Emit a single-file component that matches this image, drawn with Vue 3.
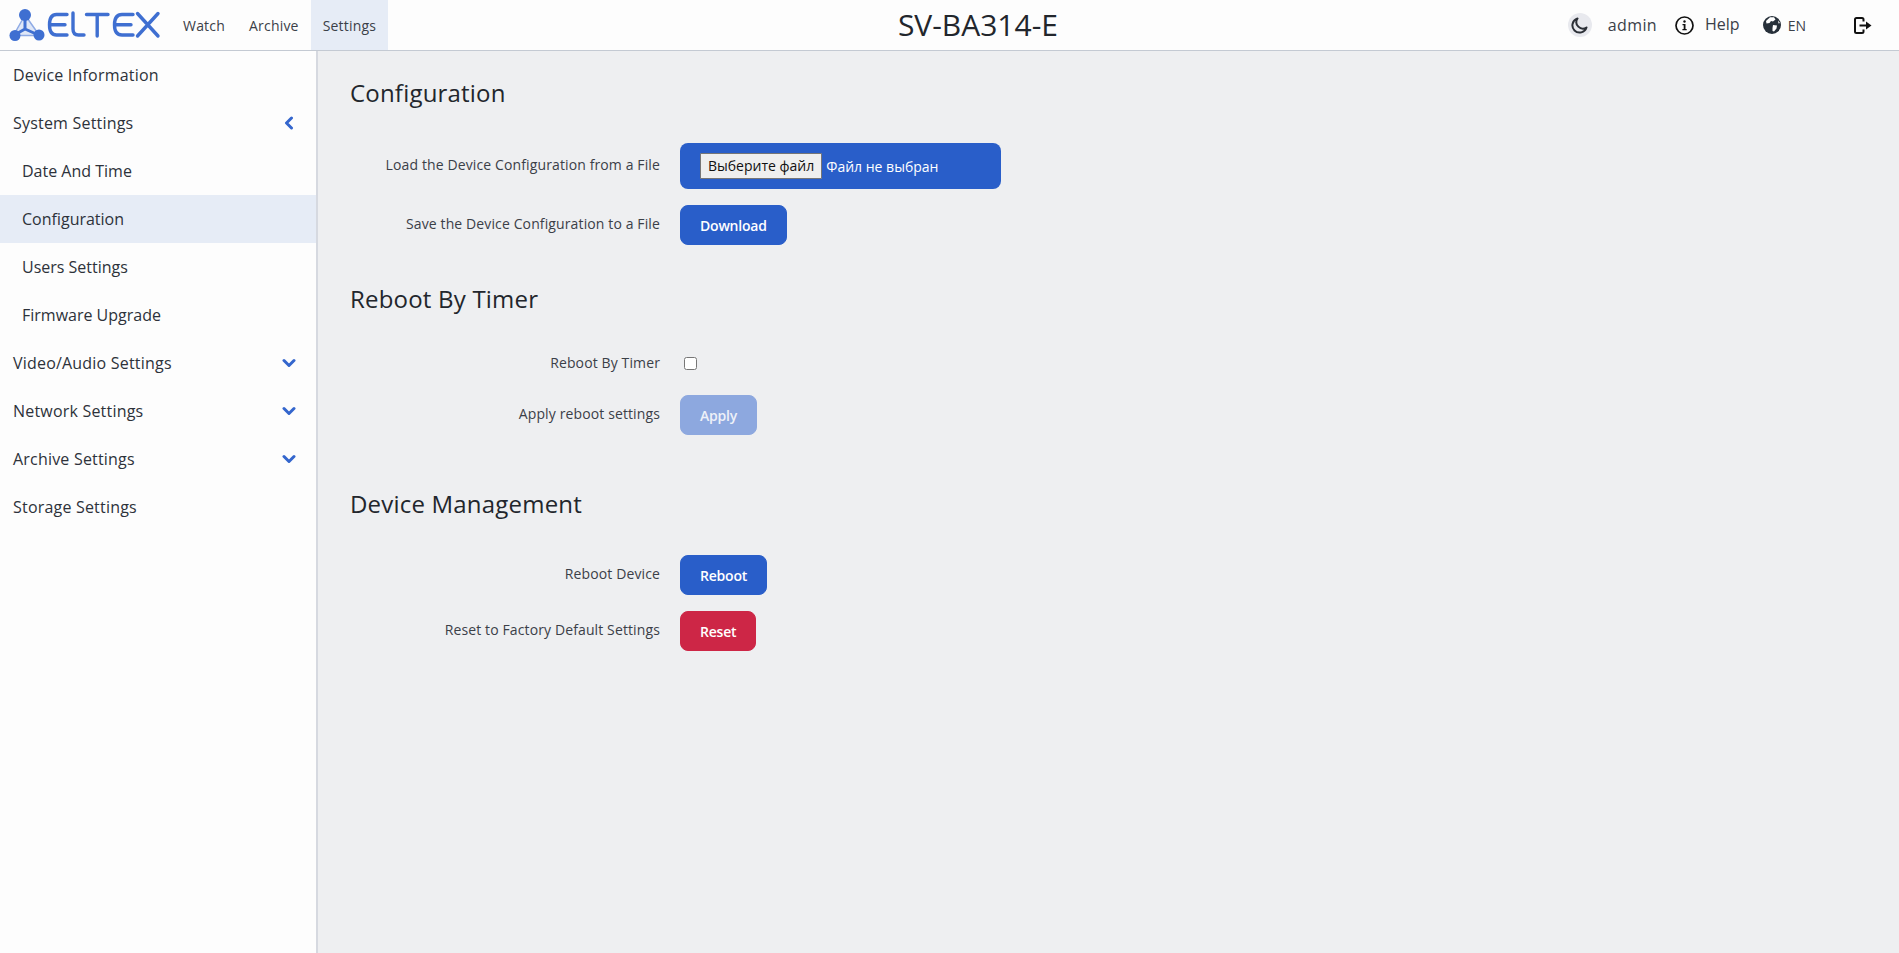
<script setup>
const nav = [
  { label: 'Watch' },
  { label: 'Archive' },
  { label: 'Settings', active: true },
]
const menu = [
  { label: 'Device Information' },
  { label: 'System Settings', arrow: 'left' },
  { label: 'Date And Time', sub: true },
  { label: 'Configuration', sub: true, active: true },
  { label: 'Users Settings', sub: true },
  { label: 'Firmware Upgrade', sub: true },
  { label: 'Video/Audio Settings', arrow: 'down' },
  { label: 'Network Settings', arrow: 'down' },
  { label: 'Archive Settings', arrow: 'down' },
  { label: 'Storage Settings' },
]
</script>

<template>
  <div class="page">
    <header class="top">
      <div class="left">
        <svg class="logo" width="171" height="50" viewBox="0 0 171 50" role="img" aria-label="Eltex">
          <path d="M25 15 L13.500 35.500 H39.500 Z" fill="#dfe7f7" stroke="#8fabe5" stroke-width="1.500" />
          <path d="M25 15 V29 M13.500 35.500 L25 29 L39.500 35.500" fill="none" stroke="#3f6fd1" stroke-width="3" stroke-linecap="round" stroke-linejoin="round" />
          <g fill="#3f6fd1">
            <circle cx="25" cy="15" r="6" />
            <circle cx="15" cy="35.500" r="5.500" />
            <circle cx="39" cy="35" r="5.500" />
          </g>
          <g fill="none" stroke="#3f6fd1" stroke-width="3.400" stroke-linecap="round" stroke-linejoin="round">
            <path d="M67 14.500 H56.500 Q49.500 14.500 49.500 24.700 Q49.500 35 56.500 35 H67 M49.500 24.700 H65" />
            <path d="M73 13 V29 Q73 35 78.500 35 H84" />
            <path d="M86.500 14.500 H108 M97.200 14.500 V36" />
            <path d="M133 14.500 H122 Q114.500 14.500 114.500 24.700 Q114.500 35 122 35 H133 M114.500 24.700 H131" />
            <path d="M137.500 13.500 L158 36 M158 13.500 L137.500 36" />
          </g>
        </svg>
        <nav class="nav">
          <a v-for="n in nav" :key="n.label" class="nav-item" :class="{ on: n.active }">{{ n.label }}</a>
        </nav>
      </div>
      <div class="title">SV-BA314-E</div>
      <div class="right">
        <span class="theme">
          <svg width="17" height="17" viewBox="0 0 17 17" fill="none" stroke="#2b2f36" stroke-width="2">
            <path d="M6.500 1.500 A7.200 7.200 0 1 0 15.500 10.500 A6.500 6.500 0 0 1 6.500 1.500 Z" stroke-linejoin="round" />
          </svg>
        </span>
        <span class="user">admin</span>
        <svg class="info" width="19" height="19" viewBox="0 0 19 19">
          <circle cx="9.500" cy="9.500" r="8.500" fill="none" stroke="#111" stroke-width="1.700" />
          <circle cx="9.500" cy="5.500" r="1.200" fill="#111" />
          <path d="M7.500 8 H10.500 V13 H11.700 V14.200 H7.400 V13 H8.700 V9.200 H7.500 Z" fill="#111" />
        </svg>
        <span class="help">Help</span>
        <svg class="globe" width="18" height="18" viewBox="0 0 18 18">
          <circle cx="9" cy="9" r="9" fill="#27303a" />
          <path d="M7 1.300 L11 1.300 L12.500 3.500 L10 5.500 L8 5 L6.500 7 L3.500 7.500 L3 5 Z M10 9 L14 9.500 L13.500 12.500 L11 15.500 L9.500 15 L9.500 12 Z M15 4.500 L17 7 L15.500 7.500 Z" fill="#fff" />
        </svg>
        <span class="lang">EN</span>
        <svg class="exit" width="18" height="17" viewBox="0 0 18 17" fill="none">
          <path d="M9.500 4.500 V2.500 Q9.500 1 8 1 H2.500 Q1 1 1 2.500 V14.500 Q1 16 2.500 16 H8 Q9.500 16 9.500 14.500 V12.500" stroke="#111" stroke-width="2" />
          <path d="M5.500 7.400 H12 V4.500 L17.500 8.500 L12 12.500 V9.600 H5.500 Z" fill="#111" />
        </svg>
      </div>
    </header>

    <div class="body">
      <aside class="side">
        <div
          v-for="m in menu"
          :key="m.label"
          class="menu-item"
          :class="{ sub: m.sub, on: m.active }"
        >
          <span>{{ m.label }}</span>
          <svg v-if="m.arrow === 'left'" class="arrow-left" width="10" height="14" viewBox="0 0 10 14" fill="none" stroke="#3466cd" stroke-width="3" stroke-linecap="round" stroke-linejoin="round">
            <path d="M7.500 2 L2.500 7 L7.500 12" />
          </svg>
          <svg v-if="m.arrow === 'down'" class="arrow-down" width="14" height="10" viewBox="0 0 14 10" fill="none" stroke="#3466cd" stroke-width="3" stroke-linecap="round" stroke-linejoin="round">
            <path d="M2 2.500 L7 7.500 L12 2.500" />
          </svg>
        </div>
      </aside>

      <main class="content">
        <section class="first">
          <h2>Configuration</h2>
          <div class="rows">
            <div class="row">
              <label class="file-label">Load the Device Configuration from a File</label>
              <div class="file-box">
                <span class="file-btn">Выберите файл</span>
                <span class="file-text">Файл не выбран</span>
              </div>
            </div>
            <div class="row">
              <label>Save the Device Configuration to a File</label>
              <button class="btn">Download</button>
            </div>
          </div>
        </section>

        <section class="second">
          <h2>Reboot By Timer</h2>
          <div class="rows">
            <div class="row check-row">
              <label>Reboot By Timer</label>
              <input type="checkbox" class="check" />
            </div>
            <div class="row">
              <label>Apply reboot settings</label>
              <button class="btn off">Apply</button>
            </div>
          </div>
        </section>

        <section class="third">
          <h2>Device Management</h2>
          <div class="rows">
            <div class="row">
              <label>Reboot Device</label>
              <button class="btn">Reboot</button>
            </div>
            <div class="row">
              <label>Reset to Factory Default Settings</label>
              <button class="btn danger">Reset</button>
            </div>
          </div>
        </section>
      </main>
    </div>
  </div>
</template>

<style>
html, body { margin: 0; height: 100%; overflow: hidden; }
</style>

<style scoped>
.page {
  width: 1899px;
  height: 953px;
  display: flex;
  flex-direction: column;
  font-family: "Open Sans", "Noto Sans", sans-serif;
  color: #2d323a;
  background: #eeeff1;
}
.top {
  height: 50px;
  flex: none;
  display: flex;
  justify-content: space-between;
  align-items: stretch;
  background: #fdfdfd;
  border-bottom: 1px solid #c4cad3;
}
.left { display: flex; align-items: stretch; }
.logo { flex: none; }
.nav { display: flex; }
.nav-item {
  display: flex;
  align-items: center;
  padding: 0 12px;
  font-size: 14px;
  letter-spacing: 0.2px;
  color: #3b4048;
}
.nav-item.on { background: #e6ecf6; }
.title {
  font-size: 30px;
  line-height: 50px;
  color: #22262c;
}
.right {
  display: flex;
  align-items: center;
  justify-content: flex-end;
  padding-right: 27px;
}
.theme {
  width: 24px;
  height: 24px;
  border-radius: 50%;
  background: #e8e9ee;
  display: flex;
  align-items: center;
  justify-content: center;
}
.user { font-size: 16px; margin-left: 16px; color: #3b4048; letter-spacing: 0.4px; }
.info { margin-left: 18px; }
.help { font-size: 16px; margin-left: 11px; margin-top: -3px; color: #3b4048; }
.globe { margin-left: 23px; }
.lang { font-size: 14px; margin-left: 7px; color: #3b4048; }
.exit { margin-left: 48px; }

.body { flex: 1; display: flex; min-height: 0; }
.side {
  width: 316px;
  flex: none;
  background: #fdfdfd;
  border-right: 2px solid #d6d9e0;
}
.menu-item {
  height: 48px;
  display: flex;
  align-items: center;
  justify-content: space-between;
  padding: 0 20px 0 13px;
  font-size: 16px;
  letter-spacing: 0.2px;
  color: #2d323a;
}
.menu-item.sub { padding-left: 22px; letter-spacing: 0; }
.menu-item.on { background: #e6ecf6; }
.arrow-left { margin-right: 2px; }

.content {
  flex: 1;
  padding-left: 32px;
}
h2 {
  margin: 0;
  font-size: 24px;
  font-weight: 400;
  letter-spacing: 0.2px;
  line-height: 33px;
  color: #22262c;
}
.first { padding-top: 25px; }
.second { padding-top: 37px; }
.third { padding-top: 52px; }
.first .rows { margin-top: 34px; }
.second .rows { margin-top: 36px; }
.third .rows { margin-top: 35px; }
.rows { display: flex; flex-direction: column; gap: 16px; }
.row {
  display: flex;
  align-items: flex-start;
  gap: 20px;
}
label {
  width: 310px;
  text-align: right;
  font-size: 14px;
  letter-spacing: 0.12px;
  line-height: 19px;
  padding-top: 9px;
  color: #3b4048;
  flex: none;
}
.file-label { padding-top: 12px; }
.check-row { align-items: center; height: 24px; margin-bottom: 4px; }
.check-row label { padding-top: 0; padding-bottom: 2px; }
.check {
  margin: 0 0 0 4px;
  width: 13px;
  height: 13px;
}
.file-box {
  width: 321px;
  height: 46px;
  box-sizing: border-box;
  background: #295ec9;
  border-radius: 8px;
  padding: 0 20px;
  display: flex;
  align-items: center;
  gap: 4px;
  color: #fff;
  font-size: 14px;
}
.file-btn {
  height: 26px;
  box-sizing: border-box;
  background: #efefef;
  border: 1px solid #767676;
  border-radius: 1px;
  color: #111;
  font-size: 14px;
  line-height: 24px;
  padding: 0 7px;
  white-space: nowrap;
}
.file-text { white-space: nowrap; }
.btn {
  height: 40px;
  padding: 0 19px;
  border: 1px solid #295ec9;
  border-radius: 8px;
  background: #295ec9;
  color: #fff;
  font-family: inherit;
  font-size: 14px;
  font-weight: 600;
  letter-spacing: -0.2px;
}
.btn.off { background: #8da8df; border-color: #8da8df; color: #eef1f8; }
.btn.danger { background: #cd2646; border-color: #cd2646; }
</style>
